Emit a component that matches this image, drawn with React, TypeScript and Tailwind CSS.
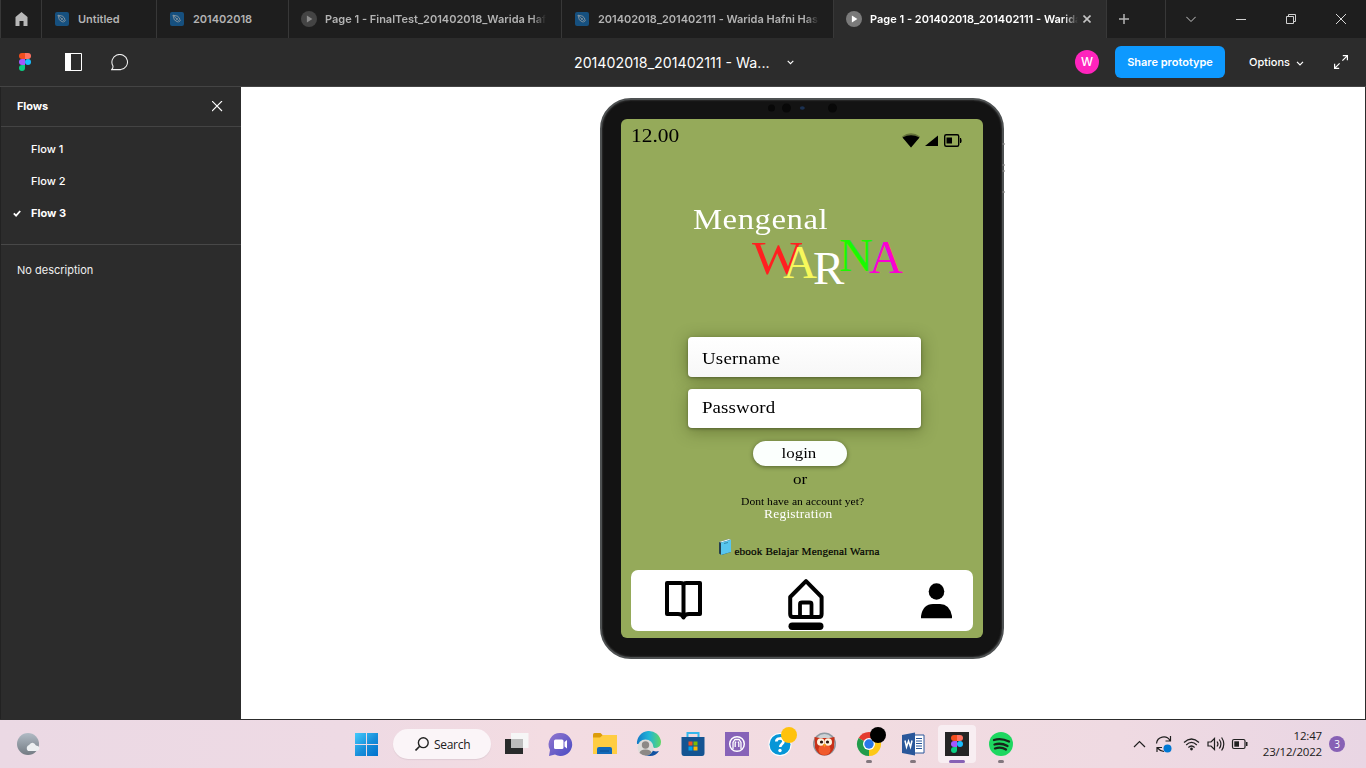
import React from 'react';

const INTER = "font-['Inter',sans-serif]";
const SERIF = "font-['Liberation_Serif',serif]";
const SEGOE = "font-['Open_Sans','Noto_Sans',sans-serif]";

function FigmaMark({ className }: { className: string }) {
  return (
    <svg className={className} viewBox="0 0 12 18">
      <path d="M3 0H6V6H3A3 3 0 0 1 3 0Z" fill="#f24e1e" />
      <path d="M6 0H9A3 3 0 0 1 9 6H6Z" fill="#ff7262" />
      <path d="M3 6H6V12H3A3 3 0 0 1 3 6Z" fill="#a259ff" />
      <circle cx="9" cy="9" r="3" fill="#1abcfe" />
      <path d="M3 12H6V15A3 3 0 1 1 3 12Z" fill="#0acf83" />
    </svg>
  );
}

function PenIcon() {
  return (
    <svg className="h-3.5 w-3.5 shrink-0" viewBox="0 0 14 14">
      <rect width="14" height="14" rx="2" fill="#16507f" />
      <path d="M3 3.2 7.8 4.2 10 7.2 7.4 9.9 4.3 7.8ZM3 3.2 6.6 6.8M8.4 10.4 10.6 8.2" fill="none" stroke="#8b979f" strokeWidth="0.9" />
      <circle cx="7" cy="7" r="0.9" fill="#8b979f" />
    </svg>
  );
}

function PlayIcon({ active }: { active?: boolean }) {
  return (
    <svg className="h-4 w-4 shrink-0" viewBox="0 0 16 16">
      <circle cx="8" cy="8" r="8" fill={active ? '#7a7a7a' : '#444444'} />
      <path d="M5.9 4.6 11.4 8 5.9 11.4Z" fill={active ? '#ffffff' : '#8c8c8c'} />
    </svg>
  );
}

function TabTitle({ text, active, className }: { text: string; active?: boolean; className: string }) {
  return (
    <div className={`relative overflow-hidden whitespace-nowrap text-[11px] font-semibold ${active ? 'text-white' : 'text-[#b3b3b3]'} ${className}`}>
      {text}
    </div>
  );
}

function TabBar() {
  const fade = '[mask-image:linear-gradient(to_right,black_calc(100%-14px),transparent)]';
  return (
    <div className="flex h-[38px] shrink-0 bg-[#1e1e1e]">
      <div className="flex w-[42px] items-center border-x border-[#383838] pl-[13.5px]">
        <svg className="h-[14px] w-[13px]" viewBox="0 0 13 14"><path d="M6.5 0 12.5 5V14H8.5V9H4.5V14H0.5V5Z" fill="#b8b8b8" /></svg>
      </div>
      <div className="flex w-[115px] items-center border-r border-[#383838] pl-[13px]">
        <PenIcon /><TabTitle text="Untitled" className="ml-[9px]" />
      </div>
      <div className="flex w-[132px] items-center border-r border-[#383838] pl-[13px]">
        <PenIcon /><TabTitle text="201402018" className="ml-[9px]" />
      </div>
      <div className="flex w-[273px] items-center border-r border-[#383838] pl-[12px]">
        <PlayIcon /><TabTitle text="Page 1 - FinalTest_201402018_Warida Hafni" className={`ml-2 w-[221px] ${fade}`} />
      </div>
      <div className="flex w-[272px] items-center border-r border-[#383838] pl-[13px]">
        <PenIcon /><TabTitle text="201402018_201402111 - Warida Hafni Hasibuan" className={`ml-[9px] w-[221px] tracking-[-0.03px] ${fade}`} />
      </div>
      <div className="flex w-[273px] items-center border-r border-[#383838] bg-[#2c2c2c] pl-[12px]">
        <PlayIcon active /><TabTitle active text="Page 1 - 201402018_201402111 - Warida Hafni" className={`ml-2 w-[208px] ${fade}`} />
        <svg className="ml-[5px] h-2 w-2" viewBox="0 0 8 8"><path d="M.5.5 7.5 7.5M7.5.5.5 7.5" stroke="#c4c4c4" strokeWidth="1.6" /></svg>
      </div>
      <div className="flex w-[59px] items-center border-r border-[#383838] pl-3">
        <svg className="h-[10px] w-[10px]" viewBox="0 0 10 10"><path d="M5 0V10M0 5H10" stroke="#b5b5b5" strokeWidth="1.5" /></svg>
      </div>
      <div className="flex flex-1 items-center justify-between pl-5 pr-5">
        <svg className="h-[10px] w-[10px]" viewBox="0 0 10 10"><path d="M.3 2.8 5 7.5 9.7 2.8" fill="none" stroke="#c8c8c8" /></svg>
        <svg className="h-[10px] w-[10px]" viewBox="0 0 10 10"><path d="M0 5.5H10" stroke="#d0d0d0" /></svg>
        <svg className="h-[10px] w-[10px]" viewBox="0 0 10 10"><path d="M.5 2.5H7.5V9.5H.5ZM2.5 2.5V.5H9.5V7.5H7.5" fill="none" stroke="#d0d0d0" /></svg>
        <svg className="h-[10px] w-[10px]" viewBox="0 0 10 10"><path d="M0 0 10 10M10 0 0 10" stroke="#d8d8d8" /></svg>
      </div>
    </div>
  );
}

function Toolbar() {
  return (
    <div className="flex h-[49px] shrink-0 items-center border-b border-[#444444] bg-[#2c2c2c] text-white">
      <FigmaMark className="ml-[19px] h-[18px] w-3" />
      <svg className="ml-[34px] h-[18px] w-[17px]" viewBox="0 0 17 18"><path d="M.5.5H16.5V17.5H.5Z" fill="none" stroke="white" /><path d="M0 0H6V18H0Z" fill="white" /></svg>
      <svg className="ml-[29px] h-[17px] w-[18px]" viewBox="0 0 18 17"><path d="M.6 15.6C2 14.4 2.2 13.2 1.9 11.8A7.8 7.6 0 1 1 9.8 15.6Z" fill="none" stroke="#f0f0f0" strokeWidth="1.05" /></svg>
      <div className="ml-[445px] w-[197px] whitespace-nowrap pt-[1px] text-[14.2px]">201402018_201402111 - Wa...</div>
      <svg className="ml-4 h-[5px] w-[7px]" viewBox="0 0 7 5"><path d="M.7.8 3.5 3.6 6.3.8" fill="none" stroke="white" strokeWidth="1.1" /></svg>
      <div className="ml-[281px] flex h-6 w-6 items-center justify-center rounded-full bg-[#ff24bd] text-[12px] font-medium">W</div>
      <div className="ml-4 flex h-8 w-[110px] items-center justify-center whitespace-nowrap rounded-[6px] bg-[#0d99ff] text-[11px] font-semibold">Share prototype</div>
      <div className="ml-6 w-[41px] text-[11px] font-medium">Options</div>
      <svg className="ml-[6px] mt-[2px] h-[5px] w-[8px]" viewBox="0 0 8 5"><path d="M1 .8 4 3.8 7 .8" fill="none" stroke="white" strokeWidth="1.2" /></svg>
      <svg className="ml-[30px] h-[14px] w-[14px]" viewBox="0 0 14 14"><path d="M8.8.6H13.4V5.2M13.2.8 8.4 5.6M.6 8.8V13.4H5.2M.8 13.2 5.6 8.4" fill="none" stroke="white" strokeWidth="1.2" /></svg>
    </div>
  );
}

function Sidebar() {
  const flows = ['Flow 1', 'Flow 2', 'Flow 3'];
  return (
    <aside className="w-[241px] shrink-0 border-l border-[#222222] bg-[#2c2c2c] text-[11px] text-white">
      <div className="flex h-10 items-center justify-between border-b border-[#444444] pl-4 pr-[18px]">
        <span className="font-bold tracking-[-0.1px]">Flows</span>
        <svg className="h-[11px] w-[11px]" viewBox="0 0 11 11"><path d="M0 0 10 10M10 0 0 10" stroke="white" strokeWidth="1.1" /></svg>
      </div>
      <div className="h-[118px] border-b border-[#484848] pt-[6px]">
        {flows.map((f, i) => (
          <div key={f} className={`flex h-8 items-center ${i === 2 ? 'font-bold' : 'font-medium'}`}>
            <div className="w-[30px] pl-3">
              {i === 2 && <svg className="h-[7px] w-2" viewBox="0 0 8 7"><path d="M.8 3.4 3.1 5.6 7.2 1" fill="none" stroke="white" strokeWidth="1.8" /></svg>}
            </div>
            {f}
          </div>
        ))}
      </div>
      <div className="pl-4 pt-[17px] text-[11px] leading-4 text-[#f0f0f0]">No description</div>
    </aside>
  );
}

function BottomNav() {
  return (
    <div className="mx-[10px] flex h-[61px] shrink-0 items-start rounded-[7px] bg-white">
      <svg className="ml-[34px] mt-[10px] h-[41px] w-[37px]" viewBox="0 0 37 41">
        <path d="M2 3H15.5Q18.5 3 18.5 5Q18.5 3 21.5 3H35V34H24Q20 34 18.5 37.5Q17 34 13 34H2ZM18.5 5V37" fill="none" stroke="black" strokeWidth="4" strokeLinejoin="round" />
      </svg>
      <svg className="ml-[86px] mt-[8px] h-[53px] w-[36px]" viewBox="0 0 36 53">
        <path d="M18 3.2 2.2 19V36Q2.2 39 5 39H31Q33.6 39 33.6 36V19Z" fill="none" stroke="black" strokeWidth="4" strokeLinejoin="round" />
        <path d="M12 38V26Q12 24.5 14 24.5H21.5Q23.5 24.5 23.5 26V38" fill="none" stroke="black" strokeWidth="3.8" />
        <rect x=".5" y="44.500" width="35" height="7.500" rx="3.700" fill="black" />
      </svg>
      <svg className="ml-[95.5px] mt-[13px] h-[36px] w-[32px]" viewBox="0 0 32 36">
        <ellipse cx="16.500" cy="8.500" rx="7.800" ry="8.300" fill="black" />
        <path d="M1 35.200V33Q3 21 13 21H20Q29.500 21 32 33V35.200Z" fill="black" />
      </svg>
    </div>
  );
}

function Tablet() {
  const letter = 'absolute text-[47px] leading-[54px]';
  return (
    <div className="relative ml-[359px] mt-[11px] h-[561px] w-[404px] rounded-[31px] border-2 border-[#4e5152] bg-[#131313] pl-[19px] pt-[19px] shadow-[inset_0_0_2px_#555]">
      <svg className="absolute left-[165px] top-[3px] h-[10px] w-[72px]" viewBox="0 0 72 10">
        <circle cx="4.500" cy="5" r="3.500" fill="#080808" /><circle cx="19.500" cy="5" r="4.500" fill="#080808" />
        <ellipse cx="35.300" cy="5" rx="2.500" ry="1.800" fill="#1b3152" /><circle cx="65.500" cy="5" r="4.500" fill="#080808" />
      </svg>
      <svg className="absolute left-[400px] top-[42px] h-[54px] w-[3px]" viewBox="0 0 3 54"><path d="M1.500 1V3M1.500 22V24M1.500 28V30M1.500 49V51" stroke="#777" strokeWidth="2" /></svg>
      <div className={`flex h-[519px] w-[362px] flex-col overflow-hidden rounded-[6px] bg-[#95aa5a] text-black ${SERIF}`}>
        <div className="flex h-[36px] shrink-0 items-start pl-[10px] pt-[5px]">
          <div className="w-[270px] text-[19.500px] leading-6"><span className="inline-block origin-left scale-x-[1.1]">12.00</span></div>
          <svg className="mt-[8px] h-[16px] w-[62px]" viewBox="0 0 62 16">
            <path d="M1 4.500Q10 -2 19 4.500L10 15.500Z" fill="#66743b" />
            <path d="M1.500 5.500Q10 0.800 18.500 5.500L10 15.500Z" fill="black" />
            <path d="M24 14 37 3.500V14Z" fill="black" />
            <rect x="43.700" y="2.700" width="14" height="11.600" rx="1.500" fill="none" stroke="black" strokeWidth="1.400" />
            <rect x="45.500" y="5.500" width="5.500" height="6" fill="black" /><path d="M59 6V11H60Q61.200 8.500 60 6Z" fill="black" />
          </svg>
        </div>
        <div className="mt-[46px] h-[36px] shrink-0 pl-[72px] text-[30px] leading-[35px] text-white"><span className="inline-block origin-left scale-x-[1.09] tracking-[0.5px]">Mengenal</span></div>
        <div className="relative h-[64px] shrink-0">
          <span className={`${letter} left-[131px] top-[-6px] origin-left scale-x-[1.130] text-[#ff2020]`}>W</span>
          <span className={`${letter} left-[162px] top-[-2px] text-[#f6f85b]`}>A</span>
          <span className={`${letter} left-[192px] top-[4px] text-white`}>R</span>
          <span className={`${letter} left-[218px] top-[-9px] text-[#19f900]`}>N</span>
          <span className={`${letter} left-[248px] top-[-7px] text-[#fa00d2]`}>A</span>
        </div>
        <div className="relative ml-[67px] mt-[36px] flex h-[40px] w-[233px] shrink-0 items-center rounded-[4px] bg-gradient-to-b from-white to-[#f7f7f7] pl-[14px] pt-[3px] text-[17.500px] shadow-[0_1px_3px_rgba(0,0,0,.3),0_2px_16px_rgba(40,50,0,.42)]"><span className="origin-left scale-x-[1.08] tracking-[0.2px]">Username</span></div>
        <div className="relative ml-[67px] mt-[12px] flex h-[39px] w-[233px] shrink-0 items-center rounded-[4px] bg-white pb-[2px] pl-[14px] text-[17.500px] shadow-[0_1px_3px_rgba(0,0,0,.3),0_4px_16px_rgba(40,50,0,.35)]"><span className="origin-left scale-x-[1.08] tracking-[0.1px]">Password</span></div>
        <div className="relative ml-[132px] mt-[13px] flex h-[25px] w-[94px] shrink-0 items-center justify-center rounded-full bg-[#fbfffd] pb-[1px] pr-[3px] text-[15.500px] shadow-[0_1px_4px_rgba(20,30,0,.5)]"><span className="scale-x-[1.09]">login</span></div>
        <div className="h-[27px] shrink-0 pl-[171.5px] text-[15.500px] leading-[26px]"><span className="inline-block origin-left scale-x-[1.1]">or</span></div>
        <div className="mt-[2px] h-[13px] shrink-0 whitespace-nowrap pl-[120px] text-[11px] leading-[13px]"><span className="inline-block origin-left scale-x-[1.055]">Dont have an account yet?</span></div>
        <div className="h-[14px] shrink-0 pl-[143px] text-[12.500px] leading-[12px] text-white"><span className="inline-block origin-left scale-x-[1.08] tracking-[0.2px]">Registration</span></div>
        <div className="mt-[15px] flex h-[33px] shrink-0 items-start pl-[97px]">
          <svg className="mt-[1px] h-[18px] w-[14px]" viewBox="0 0 14 18">
            <path d="M1 4 10.500 1 13 2V14L3.500 17 1 15.500Z" fill="#253f4c" /><path d="M1 4 10.500 1 13 1.800 3.200 4.600Z" fill="#e4f2f2" /><path d="M3 4.600 13 1.800V14L3 17Z" fill="#58c6ee" /><path d="M6 5.500 10 4.500" stroke="#338baa" />
          </svg>
          <div className="ml-[2.5px] mt-[7px] whitespace-nowrap text-[11.200px] leading-[15px] tracking-[0.130px] [-webkit-text-stroke:0.200px_black]">ebook Belajar Mengenal Warna</div>
        </div>
        <BottomNav />
      </div>
    </div>
  );
}

function TaskIcon({ kind }: { kind: string }) {
  const c = 'h-[30px] w-[30px] overflow-visible';
  switch (kind) {
    case 'tasks':
      return <svg className={c} viewBox="0 0 30 30"><path d="M3 10H21V25H3Z" fill="#292b2b" /><path d="M9 4H26.500V19H9Z" fill="#f6f6f6" /><path d="M9 10H21V19H9Z" fill="#bcbcbc" /></svg>;
    case 'chat':
      return <svg className={c} viewBox="0 0 30 30"><defs><linearGradient id="ch" x2="1" y2="1"><stop stopColor="#9277ce" /><stop offset="1" stopColor="#494bc3" /></linearGradient></defs><path d="M14.500 4A11.500 11.500 0 1 1 9 25.500L3 27 4 21A11.500 11.500 0 0 1 14.500 4Z" fill="url(#ch)" /><rect x="8" y="10.500" width="9.500" height="9.500" rx="1.500" fill="white" /><path d="M18.500 13 21 11V19.500L18.500 17.500Z" fill="white" /></svg>;
    case 'folder':
      return <svg className={c} viewBox="0 0 30 30"><path d="M3 5.500Q3 4 4.500 4H10.500L13 6.500V10H3Z" fill="#dc9c0b" /><path d="M3 8.500H10L13 6H27V25H3Z" fill="#ffcd42" /><path d="M7 25V20Q7 18 9 18H20Q22 18 22 20V25Z" fill="#1269b9" /><path d="M10 22H19" stroke="#0a4e90" /></svg>;
    case 'edge':
      return <svg className={c} viewBox="0 0 30 30"><defs><linearGradient id="ed" x2="1"><stop stopColor="#1279c7" /><stop offset=".5" stopColor="#21b5d7" /><stop offset="1" stopColor="#60d764" /></linearGradient></defs><path d="M3 15A12 12 0 0 1 27 13Q27 19 20 19L15 15Z" fill="url(#ed)" /><path d="M4 17Q6 27 16 27 22 27 25 22 18 24 14 17Z" fill="#1253a2" /><circle cx="11.500" cy="18.500" r="8" fill="#dedcda" /><circle cx="11.500" cy="16" r="3.700" fill="#8d8986" /><path d="M5.500 24Q6 20.500 11.500 20.500T17.500 24Q12 29 5.500 24Z" fill="#8d8986" /></svg>;
    case 'store':
      return <svg className={c} viewBox="0 0 30 30"><path d="M9.500 9V4H20.500V9" fill="none" stroke="#35b7ed" strokeWidth="2" /><path d="M3.500 8H26.500V24Q26.500 27 24 27H6Q3.500 27 3.500 24Z" fill="#145492" /><path d="M10.500 12.500H14.500V16.500H10.500Z" fill="#f25022" /><path d="M15.500 12.500H19.500V16.500H15.500Z" fill="#7fba00" /><path d="M10.500 17.500H14.500V21.500H10.500Z" fill="#00a4ef" /><path d="M15.500 17.500H19.500V21.500H15.500Z" fill="#ffb900" /></svg>;
    case 'purple':
      return <svg className={c} viewBox="0 0 30 30"><path d="M3 3H27V27H3Z" fill="#8763b8" /><circle cx="15" cy="15" r="7.300" fill="none" stroke="white" strokeWidth="1.500" /><path d="M11 20V13.500L13 10.500H17L19 13.500V20M13.200 18V14L14 12.700M16.800 18V14L16 12.700" fill="none" stroke="white" strokeWidth="1.300" /></svg>;
    case 'help':
      return <svg className={c} viewBox="0 0 30 30"><circle cx="14" cy="15.500" r="11.500" fill="white" /><circle cx="14" cy="15.500" r="10.500" fill="#0796d7" /><path d="M10.300 12.500C10.300 8.500 17.500 8.500 17.500 12.300 17.500 15 14.300 15 14.200 18" fill="none" stroke="white" strokeWidth="2.700" /><circle cx="14" cy="21.500" r="1.700" fill="white" /><circle cx="23" cy="6" r="8" fill="#ffc20d" /></svg>;
    case 'owl':
      return <svg className={c} viewBox="0 0 30 30"><circle cx="14.500" cy="15" r="11.500" fill="#8e99a1" /><circle cx="14.500" cy="15" r="10" fill="#cdd2d5" /><path d="M4.500 8 10 9H19L24.500 8 24 19Q21 26.500 14.500 26.500T5 19Z" fill="#c83119" /><ellipse cx="14.500" cy="20.500" rx="6" ry="5.500" fill="#f15a2c" /><circle cx="10.800" cy="13" r="3.800" fill="#fff3df" /><circle cx="18.200" cy="13" r="3.800" fill="#fff3df" /><circle cx="11.500" cy="13" r="1.600" fill="#28120d" /><circle cx="17.500" cy="13" r="1.600" fill="#28120d" /><path d="M13 15H16L14.500 18.500Z" fill="#ef9e14" /></svg>;
    case 'chrome':
      return <svg className={c} viewBox="0 0 30 30"><path d="M15 15 4.600 9A12 12 0 0 1 25.400 9Z" fill="#e43b30" /><path d="M15 15 25.400 9A12 12 0 0 1 15 27Z" fill="#fdc817" /><path d="M15 15V27A12 12 0 0 1 4.600 9Z" fill="#229c4b" /><circle cx="15" cy="15" r="6" fill="white" /><circle cx="15" cy="15" r="4.700" fill="#2878e8" /><circle cx="24" cy="6" r="8" fill="black" /></svg>;
    case 'word':
      return <svg className={c} viewBox="0 0 30 30"><path d="M15 6H26V24H15Z" fill="white" stroke="#2a579a" strokeWidth="1" /><path d="M18 9.500H24M18 12H24M18 14.500H24M18 17H24M18 19.500H24" stroke="#2a579a" /><path d="M4 6 17 3.500V26.500L4 24Z" fill="#2a579a" /><path d="M7 11.500 8.500 18 10.500 12 12.500 18 14 11.500" fill="none" stroke="white" strokeWidth="1.500" /></svg>;
    case 'figma':
      return <div className="flex h-[38px] w-[38px] items-center justify-center rounded bg-[#f8eef2]"><div className="flex h-6 w-6 items-center justify-center bg-[#252525]"><FigmaMark className="h-[18px] w-3" /></div></div>;
    default:
      return <svg className={c} viewBox="0 0 30 30"><circle cx="15" cy="15" r="12" fill="#1ed760" /><path d="M8 11Q15 8.500 23 12.500M8.500 15.500Q15 13.500 21.500 17M9 19.500Q15 17.500 20 20.500" fill="none" stroke="#17251b" strokeWidth="2.300" strokeLinecap="round" /></svg>;
  }
}

function Taskbar() {
  const icons = ['tasks', 'chat', 'folder', 'edge', 'store', 'purple', 'help', 'owl', 'chrome', 'word', 'figma', 'spotify'];
  return (
    <div className={`flex h-12 shrink-0 items-center bg-[linear-gradient(90deg,#ebd9e4_0%,#eedae4_25%,#f3dce2_40%,#f2dce1_62%,#efdae2_82%,#e9d6e4_100%)] text-[#202020] ${SEGOE}`}>
      <svg className="ml-4 h-6 w-6" viewBox="0 0 24 24"><defs><linearGradient id="moon" x2="0" y2="1"><stop stopColor="#b1bbc5" /><stop offset="1" stopColor="#737b83" /></linearGradient></defs><circle cx="12" cy="12" r="11" fill="url(#moon)" /><path d="M12 19A3.500 3.500 0 0 1 13 13Q17 8.500 20 13.500 24 14 23.500 17 23 19 20 19Z" fill="#edf0f2" /></svg>
      <svg className="ml-[315px] h-[23px] w-[23px]" viewBox="0 0 23 23"><defs><linearGradient id="win" gradientUnits="userSpaceOnUse" x1="0" y1="0" x2="23" y2="23"><stop stopColor="#44cafc" /><stop offset=".55" stopColor="#178dd9" /><stop offset="1" stopColor="#0071cd" /></linearGradient></defs><path d="M0 0H11V11H0ZM12 0H23V11H12ZM0 12H11V23H0ZM12 12H23V23H12Z" fill="url(#win)" /></svg>
      <div className="ml-[15px] flex h-[30px] w-[98px] items-center rounded-full bg-[#fbf5f8] pl-[22px] text-[12px] shadow-[0_1px_1px_#dfcbd4]">
        <svg className="h-[14px] w-[14px]" viewBox="0 0 14 14"><circle cx="8.300" cy="5.700" r="4.900" fill="none" stroke="#222" strokeWidth="1.400" /><path d="M4.700 9.200.500 13.500" stroke="#222" strokeWidth="1.600" /></svg>
        <span className="ml-[5px] mt-[1px] tracking-[-0.300px]">Search</span>
      </div>
      <div className="ml-[4px] flex h-full">
        {icons.map((k) => (
          <div key={k} className="relative flex h-full w-[44px] shrink-0 items-center justify-center">
            <TaskIcon kind={k} />
            {['chrome', 'word', 'spotify'].includes(k) && <i className="absolute bottom-[5px] left-[19px] h-[3px] w-[6px] rounded-full bg-[#82777e]" />}
            {k === 'figma' && <i className="absolute bottom-[5px] left-[14px] h-[3px] w-4 rounded-full bg-[#8761b5]" />}
          </div>
        ))}
      </div>
      <svg className="ml-[109.5px] h-[22px] w-[116px]" viewBox="0 0 116 22" fill="none" stroke="#202020" strokeWidth="1.200">
        <path d="M1 14 6.500 8.500 12 14" />
        <path d="M23.500 10.500A7.300 7.300 0 0 1 37 7.500M37.500 3V8H32.500M24 19V14.500H29M24.500 15Q27 18 31 18.500" />
        <circle cx="34.500" cy="15.500" r="4" fill="#0078d4" stroke="none" />
        <path d="M51 9.500Q58.500 2.500 66 9.500M53.200 12Q58.500 6.800 63.800 12M55.400 14.500Q58.500 11.500 61.600 14.500" /><circle cx="58.500" cy="16" r="1.400" fill="#202020" stroke="none" />
        <path d="M75 9H78L81.500 5.500V16.500L78 13H75ZM84 8.500Q86 11 84 13.500M86.300 6.500Q89.500 11 86.300 15.500M88.600 4.500Q93 11 88.600 17.500" />
        <rect x="99.500" y="6.500" width="12.500" height="9" rx="1.500" /><path d="M101.300 8.300H106V13.700H101.300Z" fill="#202020" stroke="none" /><path d="M113 9H114.500V13H113Z" fill="#202020" stroke="none" />
      </svg>
      <div className="ml-[11.5px] w-[62px] text-right text-[11.500px] leading-4 tracking-[-0.180px]"><div>12:47</div><div>23/12/2022</div></div>
      <div className="ml-[7px] flex h-4 w-4 items-center justify-center rounded-full bg-[#8761b5] text-[10px] text-white">3</div>
    </div>
  );
}

export default function App() {
  return (
    <div className={`flex h-[768px] w-[1366px] flex-col overflow-hidden bg-white ${INTER}`}>
      <TabBar />
      <Toolbar />
      <div className="flex h-[633px] shrink-0 border-b border-[#2c2c2c]">
        <Sidebar />
        <main className="flex-1 border-r border-[#2c2c2c] bg-white"><Tablet /></main>
      </div>
      <Taskbar />
    </div>
  );
}
